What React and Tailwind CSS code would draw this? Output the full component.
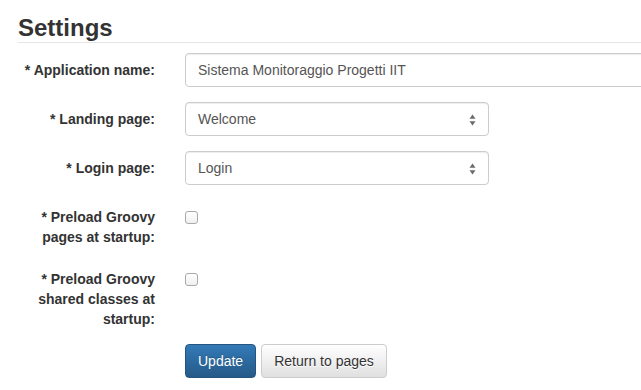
import React from 'react';

const font = { fontFamily: '"Liberation Sans", Arial, sans-serif' };

function SelectArrows() {
  return (
    <svg width="7" height="12" viewBox="0 0 7 12" className="absolute right-[12px] top-[11px]">
      <path d="M3.5 0.5 L6.5 4.8 L0.5 4.8 Z" fill="#6b6b6b" />
      <path d="M3.5 11.5 L6.5 7.2 L0.5 7.2 Z" fill="#6b6b6b" />
    </svg>
  );
}

function Label({ children, className = '' }) {
  return (
    <label className={`w-[137px] ml-[18px] mr-[30px] shrink-0 text-right font-bold text-[14px] leading-[20px] text-[#333] ${className}`}>
      {children}
    </label>
  );
}

function Select({ value }) {
  return (
    <div className="relative w-[304px] h-[34px] rounded-[4px] border border-[#ccc] bg-white shadow-[inset_0_1px_1px_rgba(0,0,0,0.075)] px-[12px] flex items-center text-[14px] text-[#555]">
      {value}
      <SelectArrows />
    </div>
  );
}

function Checkbox() {
  return (
    <div className="w-[13px] h-[13px] mt-[4px] rounded-[3px] border border-[#a9a9a9] bg-gradient-to-b from-white to-[#f0f0f0]" />
  );
}

export default function App() {
  return (
    <div className="bg-white min-h-[390px] overflow-hidden text-[#333]" style={font}>
      <div className="pl-[18px] pt-[15px]">
        <h3 className="text-[24px] leading-[26px] font-bold text-[#333] border-b border-[#e5e5e5] pb-[1px]">
          Settings
        </h3>
      </div>

      <div className="mt-[10px]">
        {/* Application name */}
        <div className="flex items-start mb-[15px]">
          <Label className="pt-[7px]">* Application name:</Label>
          <div className="w-[480px] h-[34px] shrink-0 rounded-[4px] border border-[#ccc] shadow-[inset_0_1px_1px_rgba(0,0,0,0.075)] px-[12px] flex items-center text-[14px] text-[#555]">
            Sistema Monitoraggio Progetti IIT
          </div>
        </div>

        {/* Landing page */}
        <div className="flex items-start mb-[15px]">
          <Label className="pt-[7px]">* Landing page:</Label>
          <Select value="Welcome" />
        </div>

        {/* Login page */}
        <div className="flex items-start mb-[15px]">
          <Label className="pt-[7px]">* Login page:</Label>
          <Select value="Login" />
        </div>

        {/* Preload pages */}
        <div className="flex items-start mb-[15px]">
          <Label className="pt-[7px]">* Preload Groovy pages at startup:</Label>
          <div className="pt-[7px]">
            <Checkbox />
          </div>
        </div>

        {/* Preload shared classes */}
        <div className="flex items-start mb-[15px]">
          <Label className="pt-[7px]">* Preload Groovy shared classes at startup:</Label>
          <div className="pt-[7px]">
            <Checkbox />
          </div>
        </div>

        {/* Buttons */}
        <div className="flex items-start pl-[185px] gap-[5px]">
          <button className="h-[34px] px-[12px] rounded-[4px] border border-[#245580] bg-gradient-to-b from-[#337ab7] to-[#265a88] text-white text-[14px] [text-shadow:0_-1px_0_rgba(0,0,0,0.2)]">
            Update
          </button>
          <button className="h-[34px] px-[12px] rounded-[4px] border border-[#ccc] bg-gradient-to-b from-white to-[#e0e0e0] text-[#333] text-[14px] [text-shadow:0_1px_0_#fff]">
            Return to pages
          </button>
        </div>
      </div>
    </div>
  );
}
